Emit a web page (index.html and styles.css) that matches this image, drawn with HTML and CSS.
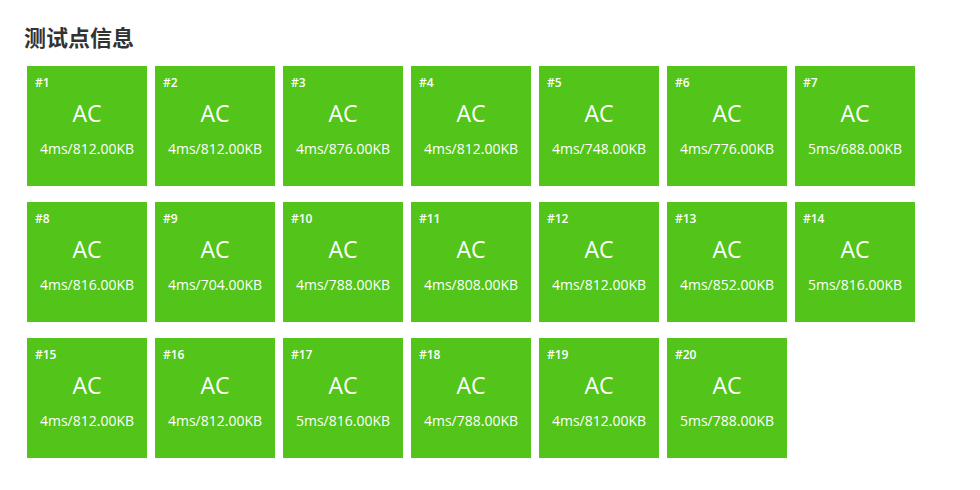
FILE: index.html
```html
<!DOCTYPE html>
<html lang="zh-CN">
<head>
  <meta charset="UTF-8">
  <title>测试点信息</title>
  <link rel="stylesheet" href="styles.css">
</head>
<body>

  <div class="panel">
    <h3>测试点信息</h3>
    <div class="cases" id="cases"></div>
  </div>

  <script>
    const results = [
      ['4ms', '812.00KB'], ['4ms', '812.00KB'], ['4ms', '876.00KB'], ['4ms', '812.00KB'],
      ['4ms', '748.00KB'], ['4ms', '776.00KB'], ['5ms', '688.00KB'], ['4ms', '816.00KB'],
      ['4ms', '704.00KB'], ['4ms', '788.00KB'], ['4ms', '808.00KB'], ['4ms', '812.00KB'],
      ['4ms', '852.00KB'], ['5ms', '816.00KB'], ['4ms', '812.00KB'], ['4ms', '812.00KB'],
      ['5ms', '816.00KB'], ['4ms', '788.00KB'], ['4ms', '812.00KB'], ['5ms', '788.00KB']
    ];

    const list = document.getElementById('cases');

    results.forEach(function(r, i) {
      const box = document.createElement('div');
      box.className = 'case';
      box.innerHTML =
        '<div class="case-id">#' + (i + 1) + '</div>' +
        '<div class="case-status">AC</div>' +
        '<div class="case-usage">' + r[0] + '/' + r[1] + '</div>';
      list.appendChild(box);
    });
  </script>

</body>
</html>
```

FILE: styles.css
```css
body {
  margin: 0;
  background: #fff;
  font-family: "Open Sans", "Noto Sans", sans-serif;
}

.panel {
  padding: 20px 24px;
}

h3 {
  margin: 0 0 14px 0;
  font-family: "Noto Sans CJK SC", "Noto Sans", sans-serif;
  font-size: 22px;
  font-weight: bold;
  line-height: 32px;
  color: #333;
}

.cases {
  display: flex;
  flex-wrap: wrap;
  gap: 16px 8px;
  padding-left: 3px;
  width: 900px;
}

.case {
  width: 120px;
  height: 120px;
  box-sizing: border-box;
  padding: 9px 8px 8px;
  background: #52c41a;
  color: #fff;
}

.case-id {
  font-size: 12px;
  font-weight: 600;
  line-height: 16px;
}

.case-status {
  margin-top: 6px;
  text-align: center;
  font-size: 23px;
  line-height: 32px;
}

.case-usage {
  margin-top: 11px;
  text-align: center;
  font-size: 14px;
  line-height: 18px;
}
```
